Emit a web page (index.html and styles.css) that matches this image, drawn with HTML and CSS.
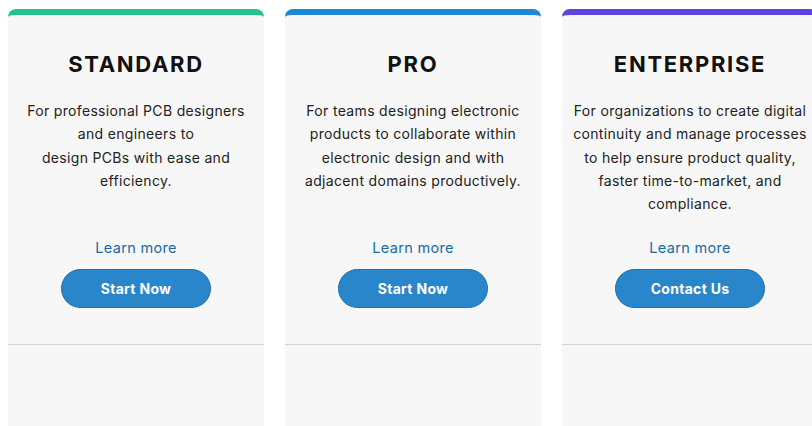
FILE: index.html
```html
<!DOCTYPE html>
<html>
<head>
<meta charset="utf-8">
<link rel="stylesheet" href="styles.css">
</head>
<body>
<div class="plans">
  <div class="card card-standard">
    <div class="card-top">
      <h2 class="title">STANDARD</h2>
      <p class="desc">For professional PCB designers and engineers to<br>design PCBs with ease and efficiency.</p>
      <a class="learn" href="#">Learn more</a>
      <a class="btn" href="#">Start Now</a>
    </div>
    <div class="card-bottom"></div>
  </div>
  <div class="card card-pro">
    <div class="card-top">
      <h2 class="title">PRO</h2>
      <p class="desc">For teams designing electronic products to collaborate within electronic design and with adjacent domains productively.</p>
      <a class="learn" href="#">Learn more</a>
      <a class="btn" href="#">Start Now</a>
    </div>
    <div class="card-bottom"></div>
  </div>
  <div class="card card-enterprise">
    <div class="card-top">
      <h2 class="title">ENTERPRISE</h2>
      <p class="desc">For organizations to create digital continuity and manage processes to help ensure product quality, faster time-to-market, and compliance.</p>
      <a class="learn" href="#">Learn more</a>
      <a class="btn" href="#">Contact Us</a>
    </div>
    <div class="card-bottom"></div>
  </div>
</div>
</body>
</html>
```

FILE: styles.css
```css
html, body {
  margin: 0;
  padding: 0;
  background: #ffffff;
  overflow: hidden;
}
.plans {
  display: flex;
  gap: 21px;
  padding: 9px 0 0 8px;
  height: 426px;
  box-sizing: border-box;
  overflow: hidden;
  font-family: "Inter", "Liberation Sans", sans-serif;
}
.card {
  flex: 0 0 256px;
  height: 430px;
  background: #f7f7f7;
  border-top: 6px solid #25c48c;
  border-radius: 8px 8px 0 0;
  display: flex;
  flex-direction: column;
}
.card-pro { border-top-color: #1e88d8; }
.card-enterprise { border-top-color: #5a45e0; }
.card-top {
  height: 329px;
  flex: 0 0 auto;
  border-bottom: 1px solid #d4d4d4;
  display: flex;
  flex-direction: column;
  align-items: center;
  text-align: center;
  padding: 0 10px;
}
.title {
  margin: 35px 0 0;
  font-size: 22px;
  line-height: 28px;
  font-weight: 700;
  color: #111;
  letter-spacing: 1.7px;
}
.desc {
  margin: 21px 0 0;
  font-size: 14px;
  line-height: 23.3px;
  color: #222;
  letter-spacing: 0.33px;
  height: 117px;
}
.learn {
  margin-top: 22px;
  font-size: 14.5px;
  line-height: 20px;
  letter-spacing: 0.3px;
  color: #1a6aa6;
  text-decoration: none;
}
.btn {
  margin-top: 11px;
  width: 150px;
  height: 39px;
  box-sizing: border-box;
  border: 1.5px solid #1d6fae;
  border-radius: 20px;
  background: #2a86cb;
  color: #fff;
  font-weight: 700;
  font-size: 14px;
  letter-spacing: 0.3px;
  display: flex;
  align-items: center;
  justify-content: center;
  text-decoration: none;
}
```
